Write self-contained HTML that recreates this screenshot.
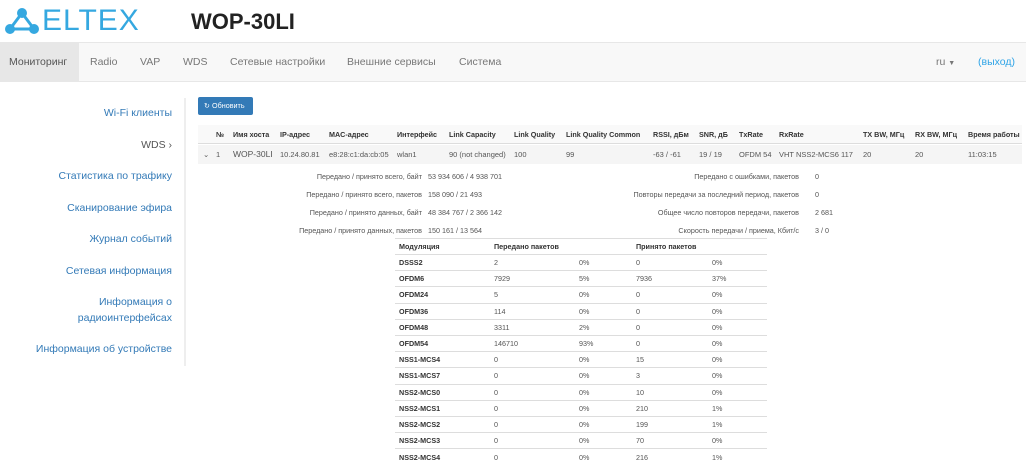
<!DOCTYPE html>
<html><head><meta charset="utf-8">
<style>
*{margin:0;padding:0;box-sizing:border-box}
body{width:1026px;height:464px;overflow:hidden;background:#fff;font-family:"Liberation Sans",Arial,sans-serif;color:#333;position:relative}
.a{position:absolute;white-space:nowrap}
.nav{position:absolute;left:0;top:42px;width:1026px;height:40px;background:#f8f8f8;border-top:1px solid #e7e7e7;border-bottom:1px solid #e7e7e7}
.nav span{position:absolute;top:13px;font-size:10.5px;color:#777}
.side{font-size:10.5px;color:#337ab7;text-align:right;right:854px;line-height:16px}
.th{font-size:7.2px;font-weight:bold;color:#333;top:130px}
.td{font-size:7.5px;color:#555;top:150px}
.dl{font-size:7.2px;color:#555;text-align:right}
.dv{font-size:7.2px;color:#555}
table.m{position:absolute;left:395px;top:238px;width:372px;border-collapse:collapse;font-size:7.2px;color:#555}
table.m td{height:16.2px;border-top:1px solid #ddd;padding:0 0 0 4px;vertical-align:middle}
table.m td:first-child{font-weight:bold;color:#333}
table.m tr:first-child td{font-weight:bold;color:#333;height:16px}
</style></head><body>
<svg class="a" style="left:4px;top:7px" width="36" height="28" viewBox="0 0 36 28">
<line x1="18" y1="6" x2="6" y2="22" stroke="#35a8e0" stroke-width="3"/>
<line x1="18" y1="6" x2="30" y2="22" stroke="#35a8e0" stroke-width="3"/>
<line x1="6" y1="22" x2="30" y2="22" stroke="#35a8e0" stroke-width="3"/>
<circle cx="18" cy="6" r="5" fill="#35a8e0"/><circle cx="6" cy="22" r="5" fill="#35a8e0"/><circle cx="30" cy="22" r="5" fill="#35a8e0"/>
</svg>
<div class="a" style="left:42px;top:4px;font-size:30px;color:#35a8e0;letter-spacing:1px">ELTEX</div>
<div class="a" style="left:191px;top:9px;font-size:22px;font-weight:bold;color:#222">WOP-30LI</div>
<div class="nav">
<div style="position:absolute;left:0;top:0;width:79px;height:38px;background:#e7e7e7"></div>
<span style="left:9px;color:#555">Мониторинг</span><span style="left:90px">Radio</span><span style="left:140px">VAP</span><span style="left:183px">WDS</span><span style="left:230px">Сетевые настройки</span><span style="left:347px">Внешние сервисы</span><span style="left:459px">Система</span>
<span style="left:936px">ru <span style="position:static;font-size:7px">▼</span></span><span style="left:978px;color:#2fa4e7">(выход)</span>
</div>
<div class="a" style="left:184px;top:98px;width:2px;height:268px;background:#eee"></div>
<div class="a side" style="top:105px">Wi-Fi клиенты</div>
<div class="a side" style="top:137px;color:#555">WDS ›</div>
<div class="a side" style="top:168px">Статистика по трафику</div>
<div class="a side" style="top:200px">Сканирование эфира</div>
<div class="a side" style="top:231px">Журнал событий</div>
<div class="a side" style="top:263px">Сетевая информация</div>
<div class="a side" style="top:294px">Информация о<br>радиоинтерфейсах</div>
<div class="a side" style="top:341px">Информация об устройстве</div>
<div class="a" style="left:198px;top:97px;width:55px;height:18px;background:#337ab7;border-radius:2px;color:#fff;font-size:7.2px;line-height:18px;padding-left:6px">↻ Обновить</div>
<div class="a" style="left:198px;top:125px;width:824px;height:19px;background:#f9f9f9;border-bottom:1px solid #ddd"></div>
<div class="a" style="left:198px;top:145px;width:824px;height:19px;background:#f5f5f5"></div>
<div class="a th" style="left:216px">№</div><div class="a th" style="left:233px">Имя хоста</div><div class="a th" style="left:280px">IP-адрес</div><div class="a th" style="left:329px">MAC-адрес</div><div class="a th" style="left:397px">Интерфейс</div><div class="a th" style="left:449px">Link Capacity</div><div class="a th" style="left:514px">Link Quality</div><div class="a th" style="left:566px">Link Quality Common</div><div class="a th" style="left:653px">RSSI, дБм</div><div class="a th" style="left:699px">SNR, дБ</div><div class="a th" style="left:739px">TxRate</div><div class="a th" style="left:779px">RxRate</div><div class="a th" style="left:863px">TX BW, МГц</div><div class="a th" style="left:915px">RX BW, МГц</div><div class="a th" style="left:968px">Время работы</div>
<div class="a td" style="left:203px">⌄</div><div class="a td" style="left:216px">1</div><div class="a td" style="left:233px;font-size:8.5px;top:149px">WOP-30LI</div><div class="a td" style="left:280px">10.24.80.81</div><div class="a td" style="left:329px">e8:28:c1:da:cb:05</div><div class="a td" style="left:397px">wlan1</div><div class="a td" style="left:449px">90 (not changed)</div><div class="a td" style="left:514px">100</div><div class="a td" style="left:566px">99</div><div class="a td" style="left:653px">-63 / -61</div><div class="a td" style="left:699px">19 / 19</div><div class="a td" style="left:739px">OFDM 54</div><div class="a td" style="left:779px">VHT NSS2-MCS6 117</div><div class="a td" style="left:863px">20</div><div class="a td" style="left:915px">20</div><div class="a td" style="left:968px">11:03:15</div>
<div class="a dl" style="right:604px;top:172px">Передано / принято всего, байт</div><div class="a dv" style="left:428px;top:172px">53 934 606 / 4 938 701</div>
<div class="a dl" style="right:604px;top:190px">Передано / принято всего, пакетов</div><div class="a dv" style="left:428px;top:190px">158 090 / 21 493</div>
<div class="a dl" style="right:604px;top:208px">Передано / принято данных, байт</div><div class="a dv" style="left:428px;top:208px">48 384 767 / 2 366 142</div>
<div class="a dl" style="right:604px;top:226px">Передано / принято данных, пакетов</div><div class="a dv" style="left:428px;top:226px">150 161 / 13 564</div>
<div class="a dl" style="right:227px;top:172px">Передано с ошибками, пакетов</div><div class="a dv" style="left:815px;top:172px">0</div>
<div class="a dl" style="right:227px;top:190px">Повторы передачи за последний период, пакетов</div><div class="a dv" style="left:815px;top:190px">0</div>
<div class="a dl" style="right:227px;top:208px">Общее число повторов передачи, пакетов</div><div class="a dv" style="left:815px;top:208px">2 681</div>
<div class="a dl" style="right:227px;top:226px">Скорость передачи / приема, Кбит/с</div><div class="a dv" style="left:815px;top:226px">3 / 0</div>
<table class="m">
<colgroup><col style="width:95px"><col style="width:85px"><col style="width:57px"><col style="width:76px"><col style="width:59px"></colgroup>
<tr><td>Модуляция</td><td colspan="2">Передано пакетов</td><td colspan="2">Принято пакетов</td></tr>
<tr><td>DSSS2</td><td>2</td><td>0%</td><td>0</td><td>0%</td></tr>
<tr><td>OFDM6</td><td>7929</td><td>5%</td><td>7936</td><td>37%</td></tr>
<tr><td>OFDM24</td><td>5</td><td>0%</td><td>0</td><td>0%</td></tr>
<tr><td>OFDM36</td><td>114</td><td>0%</td><td>0</td><td>0%</td></tr>
<tr><td>OFDM48</td><td>3311</td><td>2%</td><td>0</td><td>0%</td></tr>
<tr><td>OFDM54</td><td>146710</td><td>93%</td><td>0</td><td>0%</td></tr>
<tr><td>NSS1-MCS4</td><td>0</td><td>0%</td><td>15</td><td>0%</td></tr>
<tr><td>NSS1-MCS7</td><td>0</td><td>0%</td><td>3</td><td>0%</td></tr>
<tr><td>NSS2-MCS0</td><td>0</td><td>0%</td><td>10</td><td>0%</td></tr>
<tr><td>NSS2-MCS1</td><td>0</td><td>0%</td><td>210</td><td>1%</td></tr>
<tr><td>NSS2-MCS2</td><td>0</td><td>0%</td><td>199</td><td>1%</td></tr>
<tr><td>NSS2-MCS3</td><td>0</td><td>0%</td><td>70</td><td>0%</td></tr>
<tr><td>NSS2-MCS4</td><td>0</td><td>0%</td><td>216</td><td>1%</td></tr>
</table>
</body></html>
